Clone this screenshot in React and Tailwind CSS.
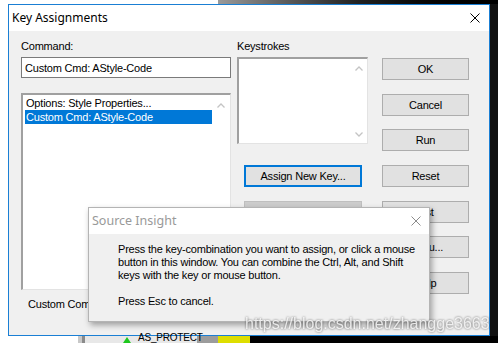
import React from "react";

const Chevron = ({ down }) => (
  <svg width="8" height="5" viewBox="0 0 8 5" className="block">
    <path d={down ? "M0.5 0.5 L4 4 L7.5 0.5" : "M0.5 4.5 L4 1 L7.5 4.5"} fill="none" stroke="#c4c4c4" strokeWidth="1.3" />
  </svg>
);

const XIcon = ({ color, size = 10 }) => (
  <svg width={size} height={size} viewBox="0 0 10 10" className="block">
    <path d="M0.5 0.5 L9.5 9.5 M9.5 0.5 L0.5 9.5" stroke={color} strokeWidth="1" fill="none" />
  </svg>
);

const Btn = ({ children }) => (
  <div className="h-[22px] w-[87px] border border-[#adadad] bg-[#e1e1e1] flex items-center justify-center text-black">
    {children}
  </div>
);

export default function App() {
  const win = "font-['Liberation_Sans',Arial,sans-serif] text-[11px] tracking-[-0.2px] leading-[14px] text-black";
  return (
    <div className={`relative w-[498px] h-[343px] overflow-hidden bg-black ${win}`}>
      {/* top strip */}
      <div className="flex h-[4px]">
        <div className="w-[218px] bg-white" />
        <div className="flex-1 bg-gradient-to-r from-[#9a9a9a] via-[#222] to-black" />
      </div>
      {/* middle row */}
      <div className="flex h-[332px]">
        <div className="w-[8px] bg-white" />
        {/* dialog */}
        <div className="w-[482px] h-[332px] border border-[#1a7fd4] flex flex-col bg-[#f0f0f0]">
          <div className="h-[26px] bg-white flex items-center justify-between pl-[3px] pr-[9px]">
            <span className="font-['Noto_Sans',sans-serif] text-[12px] tracking-normal text-black">Key Assignments</span>
            <XIcon color="#000" />
          </div>
          <div className="flex-1 flex pl-[12px] pt-[8px]">
            {/* left column */}
            <div className="w-[210px] flex flex-col">
              <div className="h-[14px]">Command:</div>
              <div className="mt-[4px] h-[21px] border border-[#7a7a7a] bg-white flex items-center pl-[3px]">
                Custom Cmd: AStyle-Code
              </div>
              <div className="mt-[15px] h-[197px] border-t-2 border-l-2 border-r border-b border-t-[#a0a0a0] border-l-[#a0a0a0] border-r-[#e3e3e3] border-b-[#e3e3e3] bg-white flex">
                <div className="w-[187px] ml-[2px] pt-[1px] flex flex-col">
                  <div className="h-[14px] pl-[1px]">Options: Style Properties...</div>
                  <div className="h-[14px] pl-[1px] bg-[#0078d7] text-white">Custom Cmd: AStyle-Code</div>
                </div>
                <div className="flex-1 flex flex-col items-center pt-[8px]">
                  <Chevron />
                </div>
              </div>
              <div className="mt-[7px] ml-[7px] w-[60px] h-[14px] overflow-hidden whitespace-nowrap">Custom Command</div>
            </div>
            {/* middle column */}
            <div className="ml-[6px] w-[131px] flex flex-col">
              <div className="h-[14px]">Keystrokes</div>
              <div className="mt-[4px] h-[87px] border-t-2 border-l-2 border-r border-b border-t-[#a0a0a0] border-l-[#a0a0a0] border-r-[#e3e3e3] border-b-[#e3e3e3] bg-white flex">
                <div className="flex-1" />
                <div className="w-[17px] flex flex-col items-center justify-between pt-[7px] pb-[6px]">
                  <Chevron />
                  <Chevron down />
                </div>
              </div>
              <div className="mt-[21px] ml-[7px] w-[118px] h-[22px] border-2 border-[#0078d7] bg-[#e1e1e1] flex items-center justify-center">
                Assign New Key...
              </div>
              <div className="mt-[14px] ml-[7px] w-[118px] h-[22px] border border-[#bfbfbf] bg-[#cccccc] flex items-center justify-center text-[#838383]">
                Delete Key
              </div>
            </div>
            {/* right column */}
            <div className="ml-[14px] mt-[19px] flex flex-col gap-[13.7px]">
              <Btn>OK</Btn>
              <Btn>Cancel</Btn>
              <Btn>Run</Btn>
              <Btn>Reset</Btn>
              <Btn>List</Btn>
              <Btn>Menu...</Btn>
              <Btn>Help</Btn>
            </div>
          </div>
        </div>
        <div className="w-[8px] bg-[#111]" />
      </div>
      {/* bottom strip */}
      <div className="flex h-[7px]">
        <div className="w-[78px] bg-white" />
        <div className="w-[4px] bg-[#c8c8c8]" />
        <div className="w-[3px] bg-[#8a8a8a]" />
        <div className="w-[112px] bg-[#e8e8e8] relative">
          <div className="absolute left-[38px] top-[1px] w-0 h-0 border-l-[4px] border-r-[4px] border-b-[6px] border-l-transparent border-r-transparent border-b-[#1ec81e]" />
          <div className="absolute left-[53px] top-[-4px] text-[10px] leading-[12px] text-black whitespace-nowrap">AS_PROTECT</div>
        </div>
        <div className="w-[21px] bg-[#9c9c9c]" />
        <div className="w-[32px] bg-[#dede00]" />
        <div className="flex-1 bg-black" />
      </div>

      {/* popup */}
      <div className="absolute left-[88px] top-[207px] w-[342px] h-[115px] border border-[#b4b4b4] bg-[#f0f0f0] shadow-[2px_3px_6px_rgba(0,0,0,0.35)] flex flex-col">
        <div className="h-[26px] bg-white flex items-center justify-between pl-[3px] pr-[8px]">
          <span className="font-['Noto_Sans',sans-serif] text-[12.5px] tracking-normal text-[#999999]">Source Insight</span>
          <XIcon color="#8c8c8c" />
        </div>
        <div className="pl-[29px] pt-[9px] leading-[13px]">
          <div>Press the key-combination you want to assign, or click a mouse</div>
          <div>button in this window. You can combine the Ctrl, Alt, and Shift</div>
          <div>keys with the key or mouse button.</div>
          <div className="h-[13px]" />
          <div>Press Esc to cancel.</div>
        </div>
      </div>

      {/* watermark */}
      <div className="absolute left-[245px] top-[315px] text-[16px] leading-[18px] tracking-normal text-[rgba(255,255,255,0.8)] drop-shadow-[0_0_1px_rgba(0,0,0,0.7)] whitespace-nowrap">
        https://blog.csdn.net/zhangge3663
      </div>
    </div>
  );
}
